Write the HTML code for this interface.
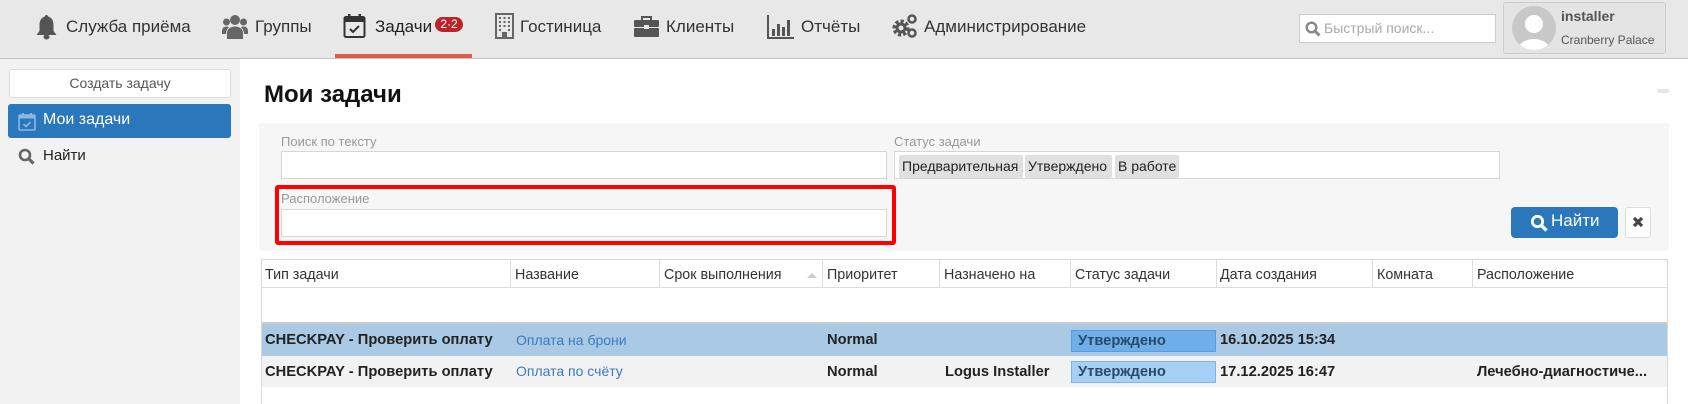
<!DOCTYPE html>
<html><head><meta charset="utf-8"><style>
*{box-sizing:border-box;margin:0;padding:0}
body{width:1688px;height:404px;overflow:hidden;background:#fff;font-family:"Liberation Sans",sans-serif;position:relative;color:#333}
.a{position:absolute}
.top{left:0;top:0;width:1688px;height:59px;background:#e8e8e8;border-bottom:1px solid #c4c4c4}
.nav{font-size:17px;color:#333;top:17px;white-space:nowrap}
.side{left:0;top:59px;width:240px;height:345px;background:#f2f2f2}
.lbl{font-size:13px;color:#999}
.inp{background:#fff;border:1px solid #d6d6d6}
.th{font-size:14.3px;color:#333;top:267px}
.vl{width:1px;background:#ddd;top:260px;height:27px}
.b{font-weight:bold;font-size:14.7px;color:#222}
</style></head><body>
<div class="a top"></div>
<svg class="a" style="left:35px;top:14px" width="23" height="26" viewBox="0 0 23 26"><path d="M11.5 1c1 0 1.6.7 1.6 1.5C17 3.5 18.5 7 18.5 11v6l3 4H1.5l3-4v-6C4.5 7 6 3.5 9.9 2.5 9.9 1.7 10.5 1 11.5 1z" fill="#555"/><ellipse cx="11.5" cy="23" rx="3" ry="2.5" fill="#555"/></svg>
<div class="a nav" style="left:66px">Служба приёма</div>
<svg class="a" style="left:222px;top:14px" width="26" height="25" viewBox="0 0 26 25"><circle cx="13" cy="6" r="5" fill="#666"/><circle cx="4.5" cy="8" r="3.5" fill="#666"/><circle cx="21.5" cy="8" r="3.5" fill="#666"/><path d="M5 25v-6c0-4 3.5-6.5 8-6.5s8 2.5 8 6.5v6z" fill="#666"/><path d="M0 20v-3c0-3 2-4.5 4.5-4.5 1 0 2 .3 2.5.7C5 15 4 17 4 20z M26 20v-3c0-3-2-4.5-4.5-4.5-1 0-2 .3-2.5.7 2 1.8 3 3.8 3 6.8z" fill="#666"/></svg>
<div class="a nav" style="left:255px">Группы</div>
<svg class="a" style="left:343px;top:13px" width="23" height="26" viewBox="0 0 23 26"><rect x="1.5" y="4" width="20" height="20" rx="1.5" fill="none" stroke="#333" stroke-width="2"/><rect x="1.5" y="4" width="20" height="5" fill="#333"/><rect x="5" y="1" width="2.5" height="6" fill="#333"/><rect x="15.5" y="1" width="2.5" height="6" fill="#333"/><path d="M7 16l3 3 6-6" fill="none" stroke="#333" stroke-width="2"/></svg>
<div class="a nav" style="left:375px;color:#222">Задачи</div>
<div class="a" style="left:435px;top:17px;width:28px;height:15px;border-radius:8px;background:#b8252a;color:#fff;font-size:12px;line-height:15px;text-align:center">2·2</div>
<div class="a" style="left:335px;top:54px;width:137px;height:4px;background:#e05a47"></div>
<svg class="a" style="left:495px;top:13px" width="19" height="26" viewBox="0 0 19 26"><rect x="1" y="1" width="17" height="24" fill="none" stroke="#666" stroke-width="2"/><g fill="#666"><rect x="4" y="4" width="2" height="2"/><rect x="8.5" y="4" width="2" height="2"/><rect x="13" y="4" width="2" height="2"/><rect x="4" y="8" width="2" height="2"/><rect x="8.5" y="8" width="2" height="2"/><rect x="13" y="8" width="2" height="2"/><rect x="4" y="12" width="2" height="2"/><rect x="8.5" y="12" width="2" height="2"/><rect x="13" y="12" width="2" height="2"/><rect x="4" y="16" width="2" height="2"/><rect x="13" y="16" width="2" height="2"/><rect x="7" y="19" width="5" height="6"/></g></svg>
<div class="a nav" style="left:520px">Гостиница</div>
<svg class="a" style="left:634px;top:15px" width="25" height="22" viewBox="0 0 25 22"><path d="M8 5V2h9v3" fill="none" stroke="#555" stroke-width="2"/><rect x="0" y="5" width="25" height="7" rx="1" fill="#555"/><rect x="0" y="13" width="25" height="9" rx="1" fill="#555"/><rect x="10" y="10" width="5" height="4" fill="#e8e8e8"/></svg>
<div class="a nav" style="left:666px">Клиенты</div>
<svg class="a" style="left:767px;top:14px" width="27" height="25" viewBox="0 0 27 25"><path d="M1 1v23h26" fill="none" stroke="#555" stroke-width="2"/><g fill="#555"><rect x="5" y="15" width="3" height="7"/><rect x="10" y="10" width="3" height="12"/><rect x="15" y="13" width="3" height="9"/><rect x="20" y="6" width="3" height="16"/></g></svg>
<div class="a nav" style="left:801px">Отчёты</div>
<svg class="a" style="left:892px;top:13px" width="26" height="26" viewBox="0 0 26 26"><circle cx="9" cy="15" r="6.5" fill="none" stroke="#555" stroke-width="4" stroke-dasharray="3 2"/><circle cx="9" cy="15" r="4" fill="none" stroke="#555" stroke-width="3"/><circle cx="20" cy="6" r="3.5" fill="none" stroke="#555" stroke-width="2.5"/><circle cx="20" cy="20" r="3.5" fill="none" stroke="#555" stroke-width="2.5"/></svg>
<div class="a nav" style="left:924px">Администрирование</div>
<div class="a inp" style="left:1299px;top:14px;width:197px;height:29px;border-color:#ccc"></div>
<svg class="a" style="left:1305px;top:21px" width="16" height="16" viewBox="0 0 16 16"><circle cx="6.5" cy="6.5" r="4.8" fill="none" stroke="#888" stroke-width="2.4"/><path d="M10 10l4.5 4.5" stroke="#888" stroke-width="3"/></svg>
<div class="a" style="left:1324px;top:20px;font-size:14px;color:#aaa">Быстрый поиск...</div>
<div class="a" style="left:1503px;top:2px;width:163px;height:52px;border:1px solid #ccc;border-radius:3px;background:#e4e4e4"></div>
<svg class="a" style="left:1512px;top:6px" width="44" height="44" viewBox="0 0 44 44"><clipPath id="c"><circle cx="22" cy="22" r="22"/></clipPath><circle cx="22" cy="22" r="22" fill="#c8c8c8"/><g clip-path="url(#c)" fill="#fff"><circle cx="22" cy="18" r="9"/><ellipse cx="22" cy="44" rx="16" ry="11"/></g></svg>
<div class="a" style="left:1561px;top:8px;font-size:14px;font-weight:bold;color:#555">installer</div>
<div class="a" style="left:1561px;top:33px;font-size:12px;color:#555">Cranberry Palace</div>

<div class="a side"></div>
<div class="a" style="left:9px;top:69px;width:222px;height:29px;background:#fff;border:1px solid #ddd;border-radius:3px;text-align:center;font-size:14px;line-height:27px;color:#555">Создать задачу</div>
<div class="a" style="left:8px;top:104px;width:223px;height:34px;background:#2a77bb;border-radius:3px"></div>
<svg class="a" style="left:18px;top:112px" width="18" height="19" viewBox="0 0 18 19"><rect x="1" y="3" width="16" height="15" rx="1" fill="none" stroke="#8db8e0" stroke-width="1.6"/><rect x="1" y="3" width="16" height="3.5" fill="#8db8e0"/><rect x="4" y="1" width="2" height="4" fill="#8db8e0"/><rect x="12" y="1" width="2" height="4" fill="#8db8e0"/><path d="M5.5 12l2.5 2.5 4.5-4.5" fill="none" stroke="#8db8e0" stroke-width="1.6"/></svg>
<div class="a" style="left:43px;top:111px;font-size:16px;color:#fff">Мои задачи</div>
<svg class="a" style="left:18px;top:148px" width="17" height="17" viewBox="0 0 17 17"><circle cx="7" cy="7" r="5" fill="none" stroke="#666" stroke-width="2.6"/><path d="M10.5 10.5l5 5" stroke="#666" stroke-width="3.2"/></svg>
<div class="a" style="left:43px;top:147px;font-size:15px;color:#222">Найти</div>

<div class="a" style="left:264px;top:81px;font-size:24px;font-weight:bold;color:#111">Мои задачи</div>
<div class="a" style="left:1657px;top:89px;width:12px;height:4px;border-radius:2px;background:#e6e6e6"></div>

<div class="a" style="left:259px;top:123px;width:1410px;height:128px;background:#f6f6f6;border-radius:3px"></div>
<div class="a lbl" style="left:281px;top:134px">Поиск по тексту</div>
<div class="a inp" style="left:281px;top:151px;width:606px;height:28px"></div>
<div class="a lbl" style="left:894px;top:134px">Статус задачи</div>
<div class="a inp" style="left:894px;top:151px;width:606px;height:28px"></div>
<div class="a" style="left:899px;top:155px;width:124px;height:23px;background:#e0e0e0;border-radius:2px;font-size:14px;line-height:23px;padding-left:3px;color:#222">Предварительная</div>
<div class="a" style="left:1025px;top:155px;width:87px;height:23px;background:#e0e0e0;border-radius:2px;font-size:14px;line-height:23px;padding-left:3px;color:#222">Утверждено</div>
<div class="a" style="left:1115px;top:155px;width:64px;height:23px;background:#e0e0e0;border-radius:2px;font-size:14px;line-height:23px;padding-left:3px;color:#222">В работе</div>
<div class="a" style="left:275px;top:185px;width:621px;height:60px;border:4px solid #f00;border-radius:3px"></div>
<div class="a lbl" style="left:281px;top:191px">Расположение</div>
<div class="a inp" style="left:281px;top:209px;width:606px;height:28px"></div>
<div class="a" style="left:1511px;top:207px;width:107px;height:31px;background:#2a77bb;border-radius:4px"></div>
<svg class="a" style="left:1530px;top:214px" width="18" height="18" viewBox="0 0 18 18"><circle cx="7.5" cy="7.5" r="5.2" fill="none" stroke="#fff" stroke-width="2.8"/><path d="M11.5 11.5l5 5" stroke="#fff" stroke-width="3.4"/></svg>
<div class="a" style="left:1551px;top:211px;font-size:17px;color:#fff">Найти</div>
<div class="a" style="left:1625px;top:207px;width:26px;height:31px;background:#fff;border:1px solid #ddd;border-radius:3px"></div>
<svg class="a" style="left:1632px;top:216px" width="12" height="12" viewBox="0 0 12 12"><path d="M2 2l8 8M10 2l-8 8" stroke="#444" stroke-width="3.2"/></svg>

<div class="a" style="left:261px;top:259px;width:1407px;height:145px;border:1px solid #d8d8d8;border-bottom:none"></div>
<div class="a" style="left:262px;top:287px;width:1405px;height:1px;background:#ddd"></div>
<div class="a" style="left:262px;top:322px;width:1405px;height:2px;background:#ccc"></div>
<div class="a" style="left:262px;top:324px;width:1405px;height:32px;background:#a9c9e4"></div>
<div class="a" style="left:262px;top:356px;width:1405px;height:31px;background:#f2f2f2"></div>
<div class="a vl" style="left:510px"></div><div class="a vl" style="left:659px"></div><div class="a vl" style="left:822px"></div><div class="a vl" style="left:939px"></div><div class="a vl" style="left:1070px"></div><div class="a vl" style="left:1216px"></div><div class="a vl" style="left:1372px"></div><div class="a vl" style="left:1472px"></div>
<div class="a th" style="left:265px">Тип задачи</div>
<div class="a th" style="left:515px">Название</div>
<div class="a th" style="left:664px">Срок выполнения</div>
<div class="a" style="left:807px;top:273px;width:0;height:0;border-left:5px solid transparent;border-right:5px solid transparent;border-bottom:5px solid #ccc"></div>
<div class="a th" style="left:827px">Приоритет</div>
<div class="a th" style="left:944px">Назначено на</div>
<div class="a th" style="left:1075px">Статус задачи</div>
<div class="a th" style="left:1220px">Дата создания</div>
<div class="a th" style="left:1377px">Комната</div>
<div class="a th" style="left:1477px">Расположение</div>

<div class="a b" style="left:265px;top:332px">CHECKPAY - Проверить оплату</div>
<div class="a" style="left:516px;top:332px;font-size:14px;color:#3a7bc0">Оплата на брони</div>
<div class="a b" style="left:827px;top:332px">Normal</div>
<div class="a" style="left:1071px;top:330px;width:145px;height:22px;background:#6eaee9;border:1px solid #5a9be0"></div>
<div class="a b" style="left:1078px;top:333px;color:#2a4a6a">Утверждено</div>
<div class="a b" style="left:1220px;top:332px">16.10.2025 15:34</div>

<div class="a b" style="left:265px;top:364px">CHECKPAY - Проверить оплату</div>
<div class="a" style="left:516px;top:363px;font-size:14px;color:#3a7bc0">Оплата по счёту</div>
<div class="a b" style="left:827px;top:364px">Normal</div>
<div class="a b" style="left:945px;top:364px">Logus Installer</div>
<div class="a" style="left:1071px;top:361px;width:145px;height:22px;background:#a6cff5;border:1px solid #7ab3ea"></div>
<div class="a b" style="left:1078px;top:364px;color:#2a4a6a">Утверждено</div>
<div class="a b" style="left:1220px;top:364px">17.12.2025 16:47</div>
<div class="a b" style="left:1477px;top:364px">Лечебно-диагностиче...</div>
</body></html>
